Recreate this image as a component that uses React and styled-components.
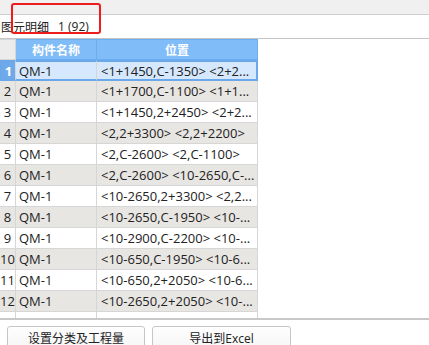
import React from 'react';
import styled, { createGlobalStyle } from 'styled-components';

const Global = createGlobalStyle`
  html, body { margin: 0; padding: 0; background: #fff; overflow: hidden; }
  body { font-family: 'Open Sans', 'Noto Sans CJK SC', sans-serif; color: #222; }
`;

const Page = styled.div`
  position: relative;
  width: 429px;
  height: 345px;
  display: flex;
  flex-direction: column;
  overflow: hidden;
  background: #fff;
  & > * { flex-shrink: 0; }
`;

const TopStrip = styled.div`
  height: 14px;
  background: #f0f0f0;
  border-bottom: 1px solid #cfcfcf;
`;

const TitleBar = styled.div`
  height: 23px;
  display: flex;
  align-items: center;
  gap: 9px;
  padding-left: 1px;
  font-size: 12px;
  border-bottom: 1px solid #c4c4c4;
`;

const Highlight = styled.div`
  position: absolute;
  left: 11px;
  top: 3px;
  width: 86px;
  height: 27px;
  border: 2px solid #ee1c1c;
  border-radius: 3px;
`;

const GridArea = styled.div`
  height: 279px;
  overflow: hidden;
  border-bottom: 2px solid #c8c8c8;
`;

const Grid = styled.div`
  width: 258px;
  display: grid;
  grid-template-columns: 16px 81px 161px;
  grid-auto-rows: 21px;
  font-size: 13px;
`;

const Row = styled.div`
  display: contents;
`;

const HeadCell = styled.div`
  display: flex;
  align-items: center;
  justify-content: center;
  font-size: 12px;
  background: ${p => (p.corner ? '#ececec' : '#80bcf8')};
  color: #fff;
  font-weight: bold;
  border-right: 1px solid ${p => (p.corner ? '#d6d6d6' : '#6aaef0')};
  border-bottom: 1px solid ${p => (p.corner ? '#d6d6d6' : '#6aaef0')};
  border-top: 1px solid ${p => (p.corner ? '#d6d6d6' : '#6aaef0')};
`;

const Cell = styled.div`
  display: flex;
  align-items: center;
  padding-left: ${p => (p.num ? '0' : p.pad || '3px')};
  justify-content: ${p => (p.num ? 'center' : 'flex-start')};
  white-space: nowrap;
  overflow: hidden;
  background: ${p => (p.sel ? (p.num ? '#6ea9ec' : '#d5e8fe') : p.alt ? '#e8e6e2' : '#fff')};
  color: ${p => (p.sel && p.num ? '#fff' : '#222')};
  font-weight: ${p => (p.sel && p.num ? 'bold' : 'normal')};
  border-right: 1px solid #d6d6d6;
  border-bottom: 1px solid #d6d6d6;
  ${p => p.sel && `
    border-top: 2px solid #6aa8ea;
    border-bottom: 2px solid #6aa8ea;
  `}
  ${p => p.sel && p.num && 'border-left: 2px solid #6aa8ea;'}
  ${p => p.sel && p.last && 'border-right: 2px solid #6aa8ea;'}
`;

const Footer = styled.div`
  display: flex;
  gap: 7px;
  padding: 6px 0 0 7px;
`;

const Button = styled.button`
  width: ${p => p.w}px;
  height: 28px;
  padding: 0 0 4px;
  background: linear-gradient(#fefefe, #f4f4f4);
  border: 1px solid #c6c6c6;
  border-radius: 3px;
  font-family: 'Open Sans', 'Noto Sans CJK SC', sans-serif;
  font-size: 12px;
  color: #222;
`;

const rows = [
  '<1+1450,C-1350> <2+2...',
  '<1+1700,C-1100> <1+1...',
  '<1+1450,2+2450> <2+2...',
  '<2,2+3300> <2,2+2200>',
  '<2,C-2600> <2,C-1100>',
  '<2,C-2600> <10-2650,C-...',
  '<10-2650,2+3300> <2,2...',
  '<10-2650,C-1950> <10-...',
  '<10-2900,C-2200> <10-...',
  '<10-650,C-1950> <10-6...',
  '<10-650,2+2050> <10-6...',
  '<10-2650,2+2050> <10-...',
  '',
];

export default function App() {
  return (
    <Page>
      <Global />
      <TopStrip />
      <TitleBar>
        <span>图元明细</span>
        <span>1 (92)</span>
      </TitleBar>
      <Highlight />
      <GridArea>
        <Grid>
          <HeadCell corner />
          <HeadCell>构件名称</HeadCell>
          <HeadCell>位置</HeadCell>
          {rows.map((pos, i) => {
            const sel = i === 0;
            const alt = i % 2 === 1;
            return (
              <Row key={i}>
                <Cell num sel={sel} alt={alt}>{i < 12 ? i + 1 : ''}</Cell>
                <Cell sel={sel} alt={alt}>{i < 12 ? 'QM-1' : ''}</Cell>
                <Cell sel={sel} alt={alt} last pad="4px">{pos}</Cell>
              </Row>
            );
          })}
        </Grid>
      </GridArea>
      <Footer>
        <Button w={138}>设置分类及工程量</Button>
        <Button w={139}>导出到Excel</Button>
      </Footer>
    </Page>
  );
}
